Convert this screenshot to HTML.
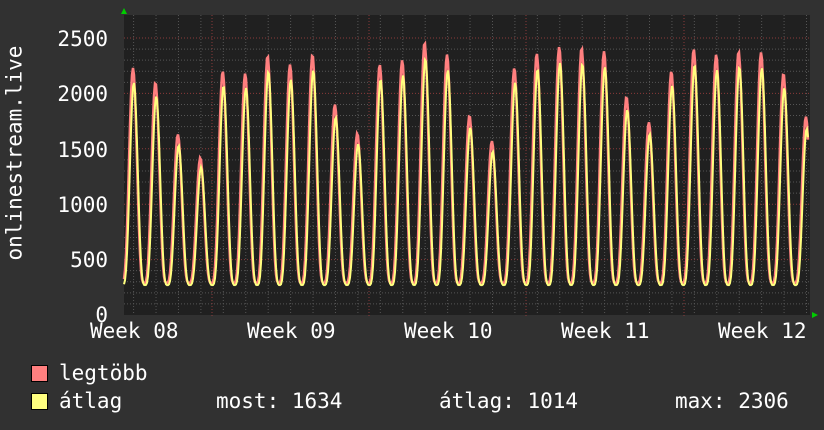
<!DOCTYPE html>
<html><head><meta charset="utf-8"><style>
html,body{margin:0;padding:0;background:#313131;}
body{width:824px;height:430px;overflow:hidden;position:relative;font-family:"DejaVu Sans Mono","Liberation Mono",monospace;color:#fff;}
.t{position:absolute;font-size:21px;white-space:pre;line-height:1;}
.sq{position:absolute;width:15px;height:15px;border:1px solid #000;}
</style></head><body>
<svg id="g" width="824" height="430" style="position:absolute;left:0;top:0">
<rect x="124" y="15" width="686" height="300" fill="#202020"/>
<g id="grid"></g>
<g id="lines"></g>
<polygon points="121,14 127,14 124,8" fill="#0c0"/>
<polygon points="812,312 812,318 818,315" fill="#0c0"/>
</svg>
<div class="t" style="right:716px;top:29px">2500</div>
<div class="t" style="right:716px;top:84px">2000</div>
<div class="t" style="right:716px;top:140px">1500</div>
<div class="t" style="right:716px;top:195px">1000</div>
<div class="t" style="right:716px;top:250px">500</div>
<div class="t" style="right:716px;top:305px">0</div>
<div class="t" style="left:-80px;top:155px;transform:rotate(-90deg);width:190px;text-align:center">onlinestream.live</div>
<div class="t" style="left:90px;top:321px">Week 08</div>
<div class="t" style="left:247px;top:321px">Week 09</div>
<div class="t" style="left:404px;top:321px">Week 10</div>
<div class="t" style="left:561px;top:321px">Week 11</div>
<div class="t" style="left:718px;top:321px">Week 12</div>
<div class="sq" style="left:31px;top:365px;background:#ff7f7f"></div>
<div class="sq" style="left:31px;top:393px;background:#ffff7f"></div>
<div class="t" style="left:59px;top:363px">legtöbb</div>
<div class="t" style="left:59px;top:391px">átlag</div>
<div class="t" style="left:216px;top:391px">most: 1634</div>
<div class="t" style="left:439px;top:391px">átlag: 1014</div>
<div class="t" style="left:675px;top:391px">max: 2306</div>
<script>
function Y(v){return 315-v*277/2500;}
var g=document.getElementById('grid'),s='';
for(var v=100;v<2500;v+=100){if(v%500)s+='<line x1="124" x2="810" y1="'+Y(v)+'" y2="'+Y(v)+'" stroke="#555" stroke-dasharray="1,2"/>';}
for(var x=124+9.6;x<810;x+=22.43){s+='<line x1="'+x+'" x2="'+x+'" y1="15" y2="315" stroke="#555" stroke-dasharray="1,2"/>';}
for(var v=500;v<=2500;v+=500){s+='<line x1="124" x2="810" y1="'+Y(v)+'" y2="'+Y(v)+'" stroke="#8a3a3a" stroke-dasharray="1,2"/>';}
[212,369,526,684].forEach(function(x){s+='<line x1="'+x+'" x2="'+x+'" y1="15" y2="318" stroke="#8a3a3a" stroke-dasharray="1,2"/>';});
g.innerHTML=s;
var P=[2230,2100,1630,1420,2200,2180,2340,2260,2350,1900,1640,2260,2300,2460,2350,1800,1570,2230,2360,2420,2410,2380,1970,1740,2200,2400,2350,2380,2370,2180,1790];
function val(x,f,base){var k=(x-133)/22.43;var d=Math.round(k);var i=Math.max(0,Math.min(P.length-1,d));var ph=k-d;var c=(1+Math.cos(2*Math.PI*ph))/2;return base+(P[i]*f-base)*Math.pow(c,1.7);}
function path(f,base,dx){var p='';for(var x=124;x<=808;x+=1){p+=(x==124?'M':'L')+x+','+Y(val(x+dx,f,base)).toFixed(1);}return p;}
document.getElementById('lines').innerHTML='<path d="'+path(1,290,0)+'" fill="none" stroke="#ff7f7f" stroke-width="2.5"/><path d="'+path(0.94,270,-0.8)+'" fill="none" stroke="#ffff7f" stroke-width="2"/>';
</script>
</body></html>
